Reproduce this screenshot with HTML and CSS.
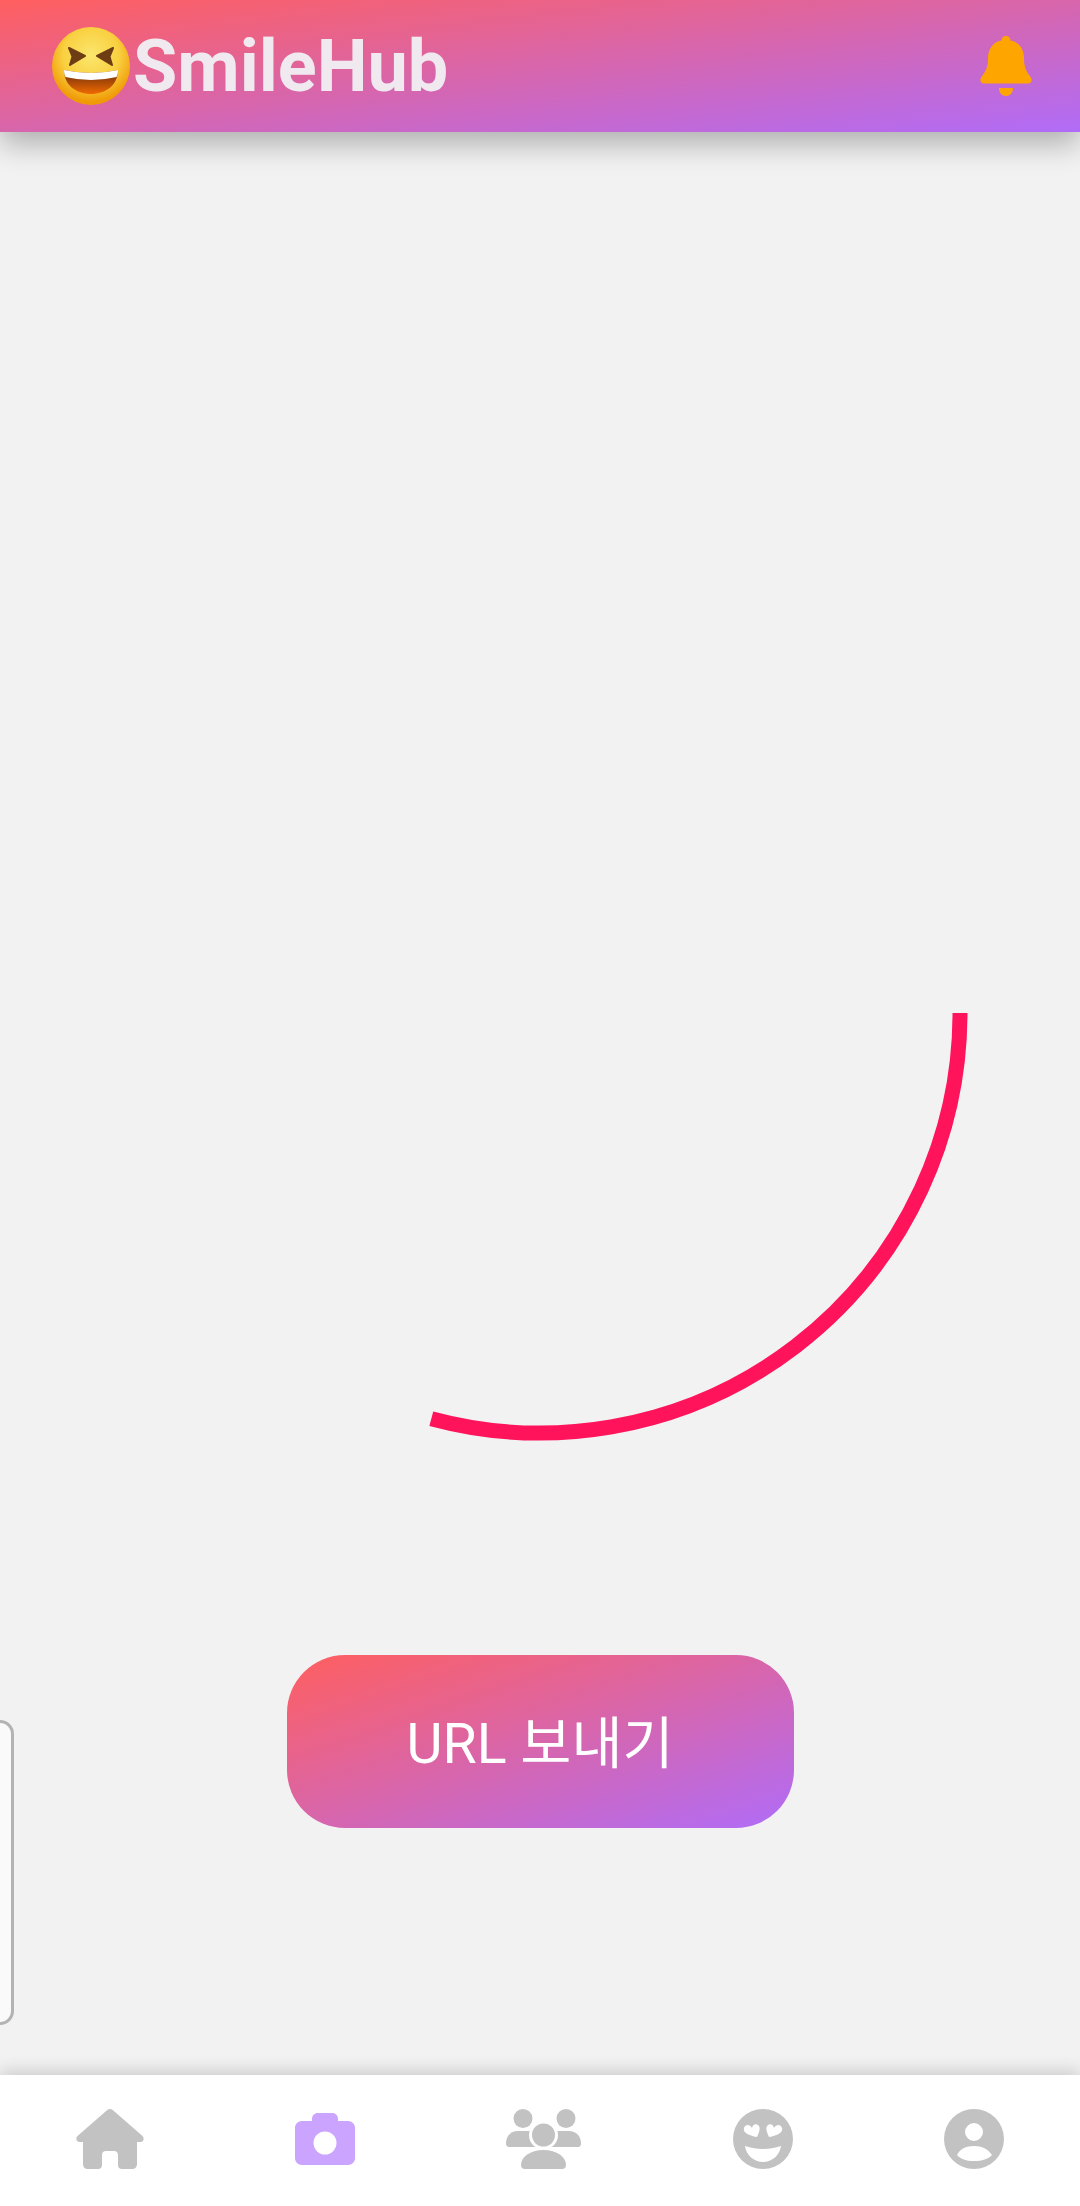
FILE: index.html
```html
<!DOCTYPE html>
<html lang="ko">
	<head>
		<title>SmileHub</title>
		<meta charset="utf-8">
		<link rel="stylesheet" href="styles.css">
	</head>

	<body>
		<header class="topbar">
			<div class="brand">
				<svg class="brand-emoji" viewBox="0 0 78 78">
					<defs>
						<radialGradient id="faceFill" cx="50%" cy="36%" r="60%">
							<stop offset="0" stop-color="#fbe66e"/>
							<stop offset="0.6" stop-color="#f9d040"/>
							<stop offset="1" stop-color="#f09a06"/>
						</radialGradient>
						<linearGradient id="mouthFill" x1="0" y1="0" x2="0" y2="1">
							<stop offset="0.35" stop-color="#96400a"/>
							<stop offset="1" stop-color="#f06a00"/>
						</linearGradient>
					</defs>
					<circle cx="39" cy="39" r="39" fill="url(#faceFill)"/>
					<path d="M17 21 L33 29 L18 38 L20.500 29.500 Z" fill="#6e3d14" stroke="#6e3d14" stroke-width="2" stroke-linejoin="round"/>
					<path d="M61 21 L45 29 L60 38 L57.500 29.500 Z" fill="#6e3d14" stroke="#6e3d14" stroke-width="2" stroke-linejoin="round"/>
					<path d="M12 43 Q39 49 66 43 C66 58 54 67 39 67 C24 67 12 58 12 43 Z" fill="url(#mouthFill)"/>
					<path d="M12 43 Q39 49 66 43 C66 46 65.500 48 64.500 50 Q39 56 13.500 50 C12.500 48 12 46 12 43 Z" fill="#fff"/>
				</svg>
				<span class="brand-name">SmileHub</span>
			</div>
			<svg class="bell" viewBox="0 0 52 60">
				<path d="M26 0 C28.800 0 30.500 2 30.500 4.500 C39 6 44 13 44 22 C44 31 46 35 50.500 41 C52.800 44 51.500 47.500 48 47.500 L4 47.500 C0.500 47.500 -0.800 44 1.500 41 C6 35 8 31 8 22 C8 13 13 6 21.500 4.500 C21.500 2 23.200 0 26 0 Z"/>
				<path d="M19 52 L33 52 C33 57 30 60 26 60 C22 60 19 57 19 52 Z"/>
			</svg>
		</header>

		<main class="content">
			<div class="side-card"></div>
			<svg class="spinner" viewBox="0 0 870 870">
				<path d="M855 435 A420 420 0 0 1 326.300 840.700"/>
			</svg>
			<button class="send-btn">URL 보내기</button>
		</main>

		<nav class="tabbar">
			<svg class="tab tab-home" viewBox="0 0 68 60">
				<path d="M31 1.200 C32.800 -0.400 35.200 -0.400 37 1.200 L66.500 27 C68.800 29.200 67.500 33 64.300 33 L61 33 L61 55 C61 58 59 60 56 60 L46 60 C43.500 60 42 58.500 42 56 L42 46 C42 43.500 40.500 42 38 42 L30 42 C27.500 42 26 43.500 26 46 L26 56 C26 58.500 24.500 60 22 60 L12 60 C9 60 7 58 7 55 L7 33 L3.700 33 C0.500 33 -0.800 29.200 1.500 27 Z"/>
			</svg>
			<svg class="tab tab-camera" viewBox="0 0 60 52">
				<path fill-rule="evenodd" d="M17 8 L17 6 C17 2.500 19.500 0 23 0 L37 0 C40.500 0 43 2.500 43 6 L43 8 L53 8 C57 8 60 11 60 15 L60 45 C60 49 57 52 53 52 L7 52 C3 52 0 49 0 45 L0 15 C0 11 3 8 7 8 Z M30 18.500 A11.500 11.500 0 1 0 30 41.500 A11.500 11.500 0 1 0 30 18.500 Z"/>
			</svg>
			<svg class="tab tab-group" viewBox="0 0 75 60">
				<circle cx="17" cy="9.500" r="9.500"/>
				<circle cx="60" cy="9.500" r="9.500"/>
				<path d="M0 34.500 C0 27 5 22 12 22 L63 22 C70 22 75 27 75 34.500 C75 36.500 74 38 72 38 L3 38 C1 38 0 36.500 0 34.500 Z"/>
				<circle class="tab-ring" cx="37.500" cy="26" r="14.500"/>
				<circle cx="37.500" cy="26" r="11.500"/>
				<path class="tab-ring" d="M20 38 L55 38 L55 41 L20 41 Z"/>
				<path d="M15 56 C15 48 24 41 37.500 41 C51 41 60 48 60 56 C60 58.500 58.500 60 56 60 L19 60 C16.500 60 15 58.500 15 56 Z"/>
			</svg>
			<svg class="tab tab-smile" viewBox="0 0 60 60">
				<path fill-rule="evenodd" d="M30 0 A30 30 0 1 0 30 60 A30 30 0 1 0 30 0 Z M19 19 C17 15 12 15 11 19 C10 23 14 26 24 28 C27 22 28 17 24 15.500 C21.500 14.500 19.500 16.500 19 19 Z M41 19 C43 15 48 15 49 19 C50 23 46 26 36 28 C33 22 32 17 36 15.500 C38.500 14.500 40.500 16.500 41 19 Z M12 37 C24 41 36 41 48 37 C47 46 39 53 30 53 C21 53 13 46 12 37 Z"/>
			</svg>
			<svg class="tab tab-profile" viewBox="0 0 60 60">
				<path fill-rule="evenodd" d="M30 0 A30 30 0 1 0 30 60 A30 30 0 1 0 30 0 Z M30 14 A9 9 0 1 0 30 32 A9 9 0 1 0 30 14 Z M13 46 C16 40 22 37 30 37 C38 37 44 40 48 46 C44 50 38 52 30 52 C22 52 17 50 13 46 Z"/>
			</svg>
		</nav>
	</body>
</html>
```

FILE: styles.css
```css
html, body {
	margin: 0;
	padding: 0;
}

body {
	width: 1080px;
	height: 2206px;
	display: flex;
	flex-direction: column;
	overflow: hidden;
	background: #f3f2f3;
	font-family: Roboto, "Noto Sans CJK KR", sans-serif;
}

.topbar {
	height: 132px;
	flex: none;
	display: flex;
	align-items: center;
	justify-content: space-between;
	padding: 0 48px 0 52px;
	background: linear-gradient(to bottom right, #ff5f5f, #b06cf8);
	box-shadow: 0 12px 28px rgba(0, 0, 0, 0.28);
	z-index: 2;
}

.brand {
	display: flex;
	align-items: center;
	gap: 3px;
}

.brand-emoji {
	width: 78px;
	height: 78px;
}

.brand-name {
	font-size: 72px;
	font-weight: 700;
	color: #f0eaf0;
}

.bell {
	width: 52px;
	height: 60px;
	fill: #ffa500;
}

.content {
	flex: 1;
	position: relative;
	display: flex;
	flex-direction: column;
	align-items: center;
	padding-top: 446px;
}

.spinner {
	width: 870px;
	height: 870px;
	flex: none;
	fill: none;
	stroke: #ff145c;
	stroke-width: 15;
}

.send-btn {
	width: 507px;
	height: 173px;
	flex: none;
	margin-top: 207px;
	padding: 0 0 6px;
	border: none;
	border-radius: 58px;
	background: linear-gradient(to bottom right, #ff5f5f, #b06cf8);
	color: #fff;
	font-family: Roboto, "Noto Sans CJK KR", sans-serif;
	font-size: 55.500px;
	font-weight: 400;
}

/* next slide, only its edge shows */
.side-card {
	position: absolute;
	left: -60px;
	top: 1588px;
	width: 68px;
	height: 299px;
	border: 3px solid #b3b3b3;
	border-radius: 14px;
	background: #fafafa;
}

.tabbar {
	height: 131px;
	flex: none;
	display: flex;
	align-items: flex-start;
	justify-content: space-around;
	padding-top: 34px;
	box-sizing: border-box;
	background: #fff;
	box-shadow: 0 -4px 16px rgba(0, 0, 0, 0.16);
	z-index: 2;
}

.tab {
	height: 60px;
	fill: #c2c2c2;
}

.tab .tab-ring {
	fill: #fff;
}

.tab-home { width: 68px; }
.tab-group { width: 75px; }
.tab-smile, .tab-profile { width: 60px; }

.tab-camera {
	width: 60px;
	height: 52px;
	margin-top: 4px;
	fill: #cba4ff;
}
```
